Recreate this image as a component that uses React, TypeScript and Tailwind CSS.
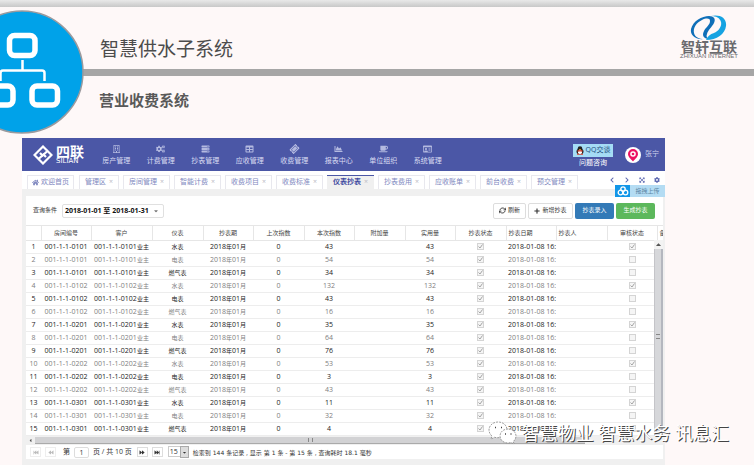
import React from 'react';
import {
  FaRegBuilding,
  FaCogs,
  FaServer,
  FaTable,
  FaTicketAlt,
  FaChartArea,
  FaCoffee,
  FaRegIdCard,
  FaHome,
  FaChevronLeft,
  FaChevronRight,
  FaExpandArrowsAlt,
  FaCog,
  FaPlus,
  FaCaretDown,
  FaCaretUp,
  FaCaretLeft,
  FaFastBackward,
  FaBackward,
  FaForward,
  FaFastForward,
} from 'react-icons/fa';
import { FiRefreshCw } from 'react-icons/fi';

const menus = [
  { name: '房产管理', icon: FaRegBuilding },
  { name: '计费管理', icon: FaCogs },
  { name: '抄表管理', icon: FaServer },
  { name: '应收管理', icon: FaTable },
  { name: '收费管理', icon: FaTicketAlt, tilt: true },
  { name: '报表中心', icon: FaChartArea },
  { name: '单位组织', icon: FaCoffee },
  { name: '系统管理', icon: FaRegIdCard },
];

const tabs = ['管理区', '房间管理', '智能计费', '收费项目', '收费标准', '仪表抄表', '抄表费用', '应收账单', '前台收费', '预交管理'];

const columns = [
  { title: '', width: 'w-[15px]' },
  { title: '房间编号', width: 'w-[50px]' },
  { title: '客户', width: 'w-[61px]' },
  { title: '仪表', width: 'w-[51px]' },
  { title: '抄表期', width: 'w-[50px]' },
  { title: '上次指数', width: 'w-[51px]' },
  { title: '本次指数', width: 'w-[50px]' },
  { title: '附加量', width: 'w-[51px]' },
  { title: '实用量', width: 'w-[50px]' },
  { title: '抄表状态', width: 'w-[51px]' },
  { title: '抄表日期', width: 'w-[50px]', left: true },
  { title: '抄表人', width: 'w-[51px]', left: true },
  { title: '审核状态', width: 'w-[50px]' },
  { title: '备', width: '', left: true },
];

const rows = [
  { room: '001-1-1-0101', meter: '水表', value: 43, audited: true },
  { room: '001-1-1-0101', meter: '电表', value: 54, audited: false },
  { room: '001-1-1-0101', meter: '燃气表', value: 34, audited: false },
  { room: '001-1-1-0102', meter: '水表', value: 132, audited: true },
  { room: '001-1-1-0102', meter: '电表', value: 43, audited: false },
  { room: '001-1-1-0102', meter: '燃气表', value: 16, audited: false },
  { room: '001-1-1-0201', meter: '水表', value: 35, audited: true },
  { room: '001-1-1-0201', meter: '电表', value: 64, audited: false },
  { room: '001-1-1-0201', meter: '燃气表', value: 76, audited: false },
  { room: '001-1-1-0202', meter: '水表', value: 53, audited: true },
  { room: '001-1-1-0202', meter: '电表', value: 3, audited: false },
  { room: '001-1-1-0202', meter: '燃气表', value: 43, audited: false },
  { room: '001-1-1-0301', meter: '水表', value: 11, audited: true },
  { room: '001-1-1-0301', meter: '电表', value: 32, audited: false },
  { room: '001-1-1-0301', meter: '燃气表', value: 4, audited: false },
];

const CompanyLogo: React.FC = () => (
  <div className="flex flex-col items-center text-[#6a6a6e]">
    <svg viewBox="0 0 38 26" className="h-[26px] w-[38px]" aria-hidden="true">
      <path d="M14 24C5 25 0 20 1 14C3 6 12 1 19 1c5 0 7 3 5 7c-2 4-6 7-7 11c-1 2 0 4 1 5c-5-1-6-4-4-8c2-4 6-6 6-10c0-3-4-3-8-1C6 8 3 13 4 18c1 4 5 6 10 6z" fill="#0f6fb8" />
      <path d="M21 1C30-1 37 3 36 11C35 19 27 25 16 25C18 21 20 19 24 18C29 16 32 11 31 7C30 3 26 1 21 1z" fill="#16a3e2" />
    </svg>
    <div className="text-[14px] leading-[12px] font-bold">智轩互联</div>
    <div className="text-[6px] leading-[7px] font-[Liberation_Sans,sans-serif]">ZHIXUAN INTERNET</div>
  </div>
);

const SystemBadge: React.FC = () => (
  <svg viewBox="0 0 84 124" className="absolute top-[10px] left-0 h-[124px] w-[84px]" aria-hidden="true">
    <circle cx="22" cy="62" r="61" fill="#00a2e9" stroke="#9a9a9e" strokeWidth="1.5" />
    <g fill="none" stroke="#fff" strokeWidth="5.5">
      <rect x="9.5" y="25.5" width="25.5" height="20" rx="5" />
      <rect x="-12.5" y="76" width="25.5" height="19" rx="5" />
      <rect x="32" y="76" width="25.5" height="19" rx="5" />
      <path d="M22.5 50v10M0.5 71v-8q0-2.5 2.5-2.5h39q2.5 0 2.5 2.5v8" strokeWidth="2.5" />
    </g>
  </svg>
);

const NavBar: React.FC = () => (
  <header className="flex h-[33px] items-center bg-[#4b57a6] text-white">
    <div className="flex w-[72px] shrink-0 items-center gap-[3px] pl-[11px]">
      <svg viewBox="0 0 20 20" className="h-5 w-5 shrink-0" fill="none" stroke="#fff" strokeWidth="2.2" aria-hidden="true">
        <path d="M14 5.500L10 1.500L1.500 10L5.500 14L10.500 9.500L13 12" />
        <path d="M6 14.500L10 18.500L18.500 10L14.500 6L9.500 10.500L7 8" />
      </svg>
      <div className="flex flex-col">
        <span className="text-[14px] leading-[14px] font-bold">四联</span>
        <span className="text-[7px] leading-[5px] font-[DejaVu_Sans,sans-serif]">SILIAN</span>
      </div>
    </div>
    <nav className="grid w-[356px] shrink-0 grid-cols-8 pt-px">
      {menus.map(({ name, icon: Icon, tilt }) => (
        <a key={name} href="#" className="flex flex-col items-center gap-[3px] text-[7px] leading-[10px] text-[#d9dcf2]">
          <Icon className={tilt ? 'h-2 w-[9px] -rotate-45 text-[#b4bae0]' : 'h-2 w-[9px] text-[#b4bae0]'} />
          {name}
        </a>
      ))}
    </nav>
    <div className="ml-auto flex items-center pr-[6px] text-[7px]">
      <div className="flex flex-col items-center pt-[3px]">
        <button className="flex h-[13px] w-10 items-center justify-center gap-[2px] bg-[#a5dcf5] text-[#1c4d7c]">
          <svg viewBox="0 0 8 9" className="h-[9px] w-2" aria-hidden="true">
            <ellipse cx="4" cy="5.5" rx="3.5" ry="3" fill="#222" />
            <circle cx="4" cy="2.5" r="2.3" fill="#222" />
            <ellipse cx="4" cy="6.2" rx="2" ry="2" fill="#fff" />
            <path d="M1.500 4.200h5v1.300h-5zM1 7.800h2.500v1H1zM4.500 7.800H7v1H4.500z" fill="#e5432d" />
            <path d="M3 3h2v.8H3z" fill="#f6a623" />
          </svg>
          QQ交谈
        </button>
        <span className="leading-[11px]">问题咨询</span>
      </div>
      <svg viewBox="0 0 16 16" className="mr-[4px] ml-[12px] h-4 w-4" aria-hidden="true">
        <circle cx="8" cy="8" r="8" fill="#fff" />
        <path d="M8 2a5 5 0 0 1 5 5c0 3-3 5-5 7.500C6 12 3 10 3 7a5 5 0 0 1 5-5z" fill="#ec1163" />
        <circle cx="8" cy="7" r="2.8" fill="#fff" />
        <circle cx="8" cy="7" r="1.3" fill="#ec1163" />
      </svg>
      <span className="text-[#cfd3ee]">张宁</span>
    </div>
  </header>
);

const TabBar: React.FC = () => (
  <div className="relative flex h-[25px] items-start gap-1 border-b-[7px] border-[#f0f0f0] bg-white pt-[4px] pl-[5px] text-[7px] text-[#8089c0]">
    <button className="mr-px flex h-[14px] w-[47px] items-center justify-center gap-[2px] border border-b-0 border-[#e8e8ee]">
      <FaHome className="h-[7px] w-[7px]" />
      欢迎首页
    </button>
    {tabs.map((tab) => (
      <button
        key={tab}
        className={
          tab === '仪表抄表'
            ? 'flex h-[14px] w-[47px] items-center justify-center gap-[3px] border-t border-[#4b57a6] bg-[#f0f0f0] font-bold text-[#3f4ba0]'
            : tab === '管理区'
              ? 'flex h-[14px] w-10 items-center justify-center gap-[3px] border border-b-0 border-[#e8e8ee]'
              : 'flex h-[14px] w-[47px] items-center justify-center gap-[3px] border border-b-0 border-[#e8e8ee]'
        }
      >
        {tab}
        <span className="font-normal text-[#bbbbc4]">×</span>
      </button>
    ))}
    <div className="ml-auto flex gap-[9px] pt-[2px] pr-[5px] text-[#5d68b0]">
      <button aria-label="向左"><FaChevronLeft className="h-[6px] w-[6px]" /></button>
      <button aria-label="向右"><FaChevronRight className="h-[6px] w-[6px]" /></button>
      <button aria-label="全屏"><FaExpandArrowsAlt className="h-[6px] w-[6px]" /></button>
      <button aria-label="设置"><FaCog className="h-[6px] w-[6px]" /></button>
    </div>
    <button className="absolute top-[14px] right-0 flex h-3 w-[50px] items-center bg-[#b4dcf3] text-[6px] text-[#5e87a5]">
      <span className="flex h-3 w-[15px] items-center justify-center bg-[#1296e8]">
        <svg viewBox="0 0 12 10" className="h-[10px] w-3" fill="none" stroke="#fff" strokeWidth="1.3" aria-hidden="true">
          <circle cx="6" cy="3" r="2.2" />
          <circle cx="3.5" cy="6.5" r="2.3" />
          <circle cx="8.5" cy="6.5" r="2.3" />
        </svg>
      </span>
      <span className="flex-1">拖拽上传</span>
    </button>
  </div>
);

const FilterBar: React.FC = () => (
  <div className="flex h-[29px] items-center pr-2 pl-[7px] text-[6px] text-[#333]">
    <label htmlFor="period" className="mr-[5px]">查询条件</label>
    <div className="relative">
      <select id="period" className="h-[14px] w-[102px] appearance-none rounded-[2px] border border-[#e0e0e0] pl-[2px] text-[7px] leading-[10px] font-bold text-[#111]">
        <option>2018-01-01 至 2018-01-31</option>
      </select>
      <FaCaretDown className="pointer-events-none absolute top-1 right-[5px] h-[6px] w-[6px] text-[#777]" />
    </div>
    <div className="ml-auto flex gap-[2px]">
      <button className="flex h-4 w-[33px] items-center justify-center gap-[2px] rounded-[2px] border border-[#ddd]">
        <FiRefreshCw className="h-[7px] w-[7px]" strokeWidth={3} />
        刷新
      </button>
      <button className="flex h-4 w-[45px] items-center justify-center gap-[2px] rounded-[2px] border border-[#ddd]">
        <FaPlus className="h-[6px] w-[6px]" />
        新增抄表
      </button>
      <button className="h-4 w-[39px] rounded-[2px] bg-[#337ab7] text-white">抄表录入</button>
      <button className="h-4 w-[39px] rounded-[2px] bg-[#5cb85c] text-white">生成抄表</button>
    </div>
  </div>
);

const Check: React.FC<{ checked: boolean; label: string }> = ({ checked, label }) => (
  <span className="mx-auto mb-[2px] grid h-[7px] w-[7px]">
    <input type="checkbox" disabled defaultChecked={checked} aria-label={label} className="col-start-1 row-start-1 h-[7px] w-[7px] appearance-none border border-[#d4d4d4] bg-[#f5f5f5]" />
    {checked && (
      <svg viewBox="0 0 7 7" className="pointer-events-none col-start-1 row-start-1 h-[7px] w-[7px]" fill="none" stroke="#a4a4a4" aria-hidden="true">
        <path d="M1.500 3.500L3 5l2.500-3.500" />
      </svg>
    )}
  </span>
);

const MeterTable: React.FC = () => (
  <div className="relative overflow-hidden">
    <table className="w-full table-fixed border-collapse text-[7px] leading-[10px] whitespace-nowrap">
      <thead>
        <tr className="h-[15px] border-y border-[#e6e6e6] text-[6px] text-[#444]">
          {columns.map((c) => (
            <th key={c.title} className={`${c.width} ${c.left ? 'pl-[2px] text-left' : 'text-center'} overflow-hidden border-r border-[#e6e6e6] p-0 font-normal last:border-r-0`}>
              {c.title}
            </th>
          ))}
        </tr>
      </thead>
      <tbody>
        {rows.map((row, i) => (
          <tr key={i} className="h-[13px] border-b border-[#ededed] text-center text-[#222] even:text-[#808080]">
            <td className="p-0">{i + 1}</td>
            <td className="p-0">{row.room}</td>
            <td className="p-0">
              {row.room}
              <span className="text-[6px]">业主</span>
            </td>
            <td className="p-0 text-[6px]">{row.meter}</td>
            <td className="p-0">
              2018<span className="text-[6px]">年</span>01<span className="text-[6px]">月</span>
            </td>
            <td className="p-0">0</td>
            <td className="p-0">{row.value}</td>
            <td className="p-0"></td>
            <td className="p-0">{row.value}</td>
            <td className="p-0"><Check checked label={`抄表状态 ${i + 1}`} /></td>
            <td className="overflow-hidden p-0 pl-[2px] text-left">2018-01-08 16:</td>
            <td className="p-0"></td>
            <td className="p-0"><Check checked={row.audited} label={`审核状态 ${i + 1}`} /></td>
            <td className="p-0"></td>
          </tr>
        ))}
      </tbody>
    </table>
    {/* vertical scrollbar */}
    <div className="absolute top-[15px] right-0 bottom-0 flex w-[9px] flex-col bg-[#f3f3f3]">
      <FaCaretUp className="mx-auto h-[9px] w-[5px] text-[#555]" />
      <div className="flex flex-1 flex-col items-center border-r-2 border-l border-r-[#b4b7bf] border-l-[#c4c4c8] bg-[#d6d7da] pt-[85px]">
        <span className="h-[5px] w-1 border-y border-[#888]" />
      </div>
    </div>
  </div>
);

const Pager: React.FC = () => (
  <div className="flex h-[14px] items-center pl-1 text-[7px] text-[#333]">
    <button aria-label="首页" disabled className="flex h-[10px] w-[11px] items-center justify-center border border-[#eee] text-[#bbb]"><FaFastBackward className="h-[5px] w-[6px]" /></button>
    <button aria-label="上一页" disabled className="ml-1 flex h-[10px] w-[11px] items-center justify-center border border-[#eee] text-[#bbb]"><FaBackward className="h-[5px] w-[6px]" /></button>
    <label htmlFor="page" className="mr-1 ml-[7px]">第</label>
    <input id="page" defaultValue="1" className="h-[11px] w-[15px] rounded-[2px] border border-[#ddd] text-center" />
    <span className="ml-1">页 / 共 10 页</span>
    <button aria-label="下一页" className="ml-[5px] flex h-[10px] w-[11px] items-center justify-center border border-[#ddd]"><FaForward className="h-[5px] w-[6px]" /></button>
    <button aria-label="末页" className="ml-1 flex h-[10px] w-[11px] items-center justify-center border border-[#ddd]"><FaFastForward className="h-[5px] w-[6px]" /></button>
    <div className="relative ml-[5px]">
      <select aria-label="每页条数" className="h-[11px] w-[21px] appearance-none border border-[#ccc] pl-px text-[7px] leading-[9px]">
        <option>15</option>
      </select>
      <span className="pointer-events-none absolute inset-y-0 right-0 flex w-[9px] items-center justify-center border border-[#aaa] bg-[#ddd]">
        <FaCaretDown className="h-[5px] w-[5px]" />
      </span>
    </div>
    <span className="ml-1 text-[6px] font-[DejaVu_Sans,Noto_Sans_CJK_SC,sans-serif]">检索到 144 条记录 , 显示 第 1 条 - 第 15 条 , 查询耗时 18.1 毫秒</span>
  </div>
);

const Watermark: React.FC = () => (
  <div className="absolute right-[25px] bottom-[20px] flex items-center gap-1 text-[18px] leading-[26px] text-white [text-shadow:1px_1px_0_#444]">
    <svg viewBox="0 0 30 26" className="h-[26px] w-[30px]" fill="#fff" stroke="#777" strokeWidth="0.7" strokeDasharray="2 1" aria-hidden="true">
      <path d="M10 2C5 2 1 5.500 1 10c0 2.500 1.200 4.500 3 6l-1 3 3.500-1.700c5 1.500 12-1 12.500-7C19 5 15 2 10 2z" />
      <path d="M20 9c-4.500 0-8 3-8 7s3.500 7 8 7c1 0 2-.2 3-.5l3 1.500-.7-2.500C27 20 28 18 28 16c0-4-3.500-7-8-7z" />
      <path d="M7 7.500h1M13 7.500h1M17 14h1M22.500 14h1" stroke="#444" strokeWidth="1.5" strokeDasharray="none" />
    </svg>
    智慧物业 智慧水务 讯息汇
  </div>
);

export default function App() {
  return (
    <div className="relative min-h-screen overflow-hidden bg-[#fef8f8] font-[Open_Sans,Noto_Sans_CJK_SC,sans-serif]">
      <div className="h-[7px] bg-linear-to-b from-[#e9e9e9] to-[#c8c8c8]" />
      <div className="flex h-[62px] items-start justify-between pr-4 pl-[100px]">
        <h1 className="pt-[28px] text-[19px] leading-[28px] text-[#4c4c4c]">智慧供水子系统</h1>
        <div className="pt-2">
          <CompanyLogo />
        </div>
      </div>
      <div className="h-[7px] bg-[#a6a6a6]" />
      <h2 className="h-[62px] pt-[13px] pl-[99px] text-[15px] leading-[22px] font-bold text-[#595959]">营业收费系统</h2>
      <SystemBadge />

      <main className="mr-[89px] ml-[22px] border-b border-[#b9bcda] bg-[#f0f0f0]">
        <NavBar />
        <TabBar />
        <section className="mr-[2px] mb-[6px] ml-1 bg-white">
          <FilterBar />
          <MeterTable />
          <div className="flex h-[9px] items-center bg-[#f0f0f0]">
            <FaCaretLeft className="h-[5px] w-[9px] text-[#555]" />
            <div className="flex h-[7px] w-[550px] items-center justify-center border-b border-[#aaa] bg-[#d2d2d4]">
              <span className="h-1 w-[5px] border-x border-[#888]" />
            </div>
          </div>
          <Pager />
        </section>
      </main>

      <Watermark />
    </div>
  );
}
